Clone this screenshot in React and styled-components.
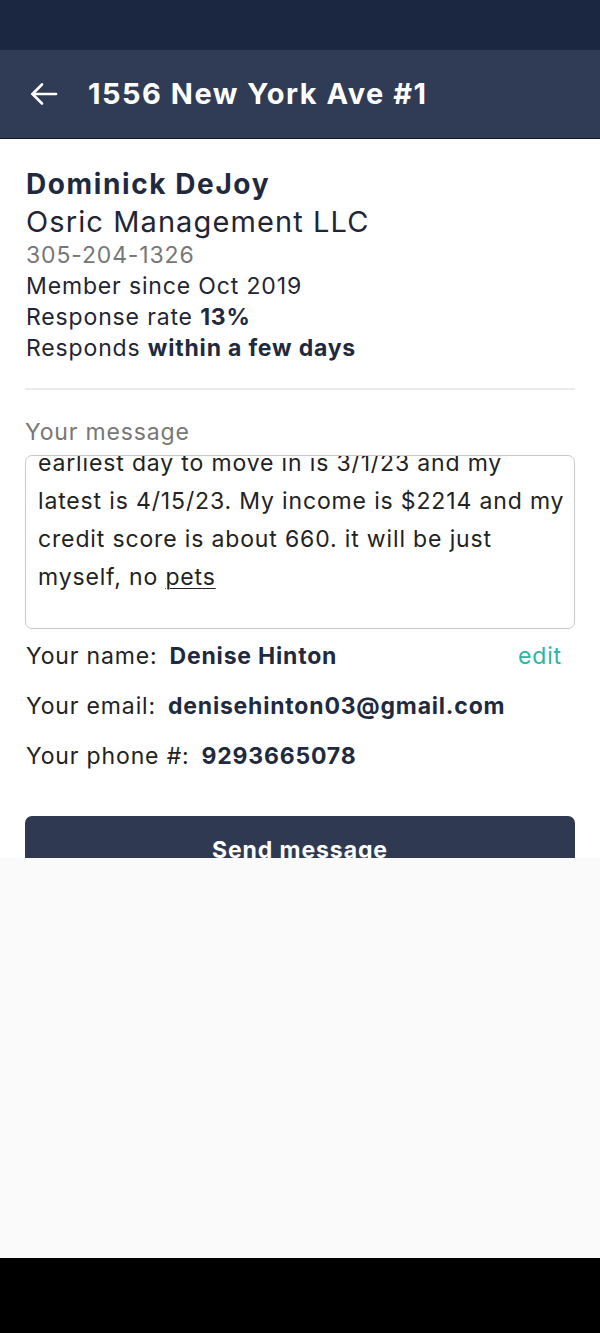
import styled, { createGlobalStyle } from 'styled-components';

const GlobalStyle = createGlobalStyle`
    html, body {
        margin: 0;
        padding: 0;
        background: #000;
    }
    * {
        box-sizing: border-box;
    }
`;

const FONT = `Inter, "Noto Sans", sans-serif`;

// the textarea is scrolled, so the first line shows only its lower part
const messageLines = [
    "earliest day to move in is 3/1/23 and my",
    "latest is 4/15/23. My income is $2214 and my",
    "credit score is about 660. it will be just",
];

export default function App(){
    return (
        <>
            <GlobalStyle/>
            <Screen>
                <StatusBar/>
                <Header>
                    <BackArrow viewBox="0 0 28 24" fill="none" stroke="#fff" strokeWidth="2.6" strokeLinecap="round" strokeLinejoin="round">
                        <path d="M26 12H2.5"/>
                        <path d="M12 2.5L2.5 12L12 21.5"/>
                    </BackArrow>
                    <Title>1556 New York Ave #1</Title>
                </Header>

                <Content>
                    <Landlord>
                        <Name>Dominick DeJoy</Name>
                        <Company>Osric Management LLC</Company>
                        <Phone>305-204-1326</Phone>
                        <Fact>Member since Oct 2019</Fact>
                        <Fact>Response rate <b>13%</b></Fact>
                        <Fact>Responds <b>within a few days</b></Fact>
                    </Landlord>

                    <Divider/>

                    <Label>Your message</Label>
                    <MessageBox>
                        <MessageText $scroll={12}>
                            {messageLines.map((line) => <span key={line}>{line}</span>)}
                            <span>myself, no <Suggest>pets</Suggest></span>
                        </MessageText>
                    </MessageBox>

                    <Details>
                        <DetailRow>
                            <DetailLabel>Your name:</DetailLabel>
                            <DetailValue>Denise Hinton</DetailValue>
                            <Edit>edit</Edit>
                        </DetailRow>
                        <DetailRow>
                            <DetailLabel>Your email:</DetailLabel>
                            <DetailValue>denisehinton03@gmail.com</DetailValue>
                        </DetailRow>
                        <DetailRow>
                            <DetailLabel>Your phone #:</DetailLabel>
                            <DetailValue>9293665078</DetailValue>
                        </DetailRow>
                    </Details>

                    <SendButton>Send message</SendButton>
                </Content>

                <Sheet/>
                <NavBar/>
            </Screen>
        </>
    )
}

const Screen = styled.div`
    width: 600px;
    height: 1333px;
    display: flex;
    flex-direction: column;
    background: #fff;
    font-family: ${FONT};
    overflow: hidden;
`;

const StatusBar = styled.div`
    height: 50px;
    flex-shrink: 0;
    background: #1b2740;
`;

const Header = styled.header`
    height: 89px;
    flex-shrink: 0;
    display: flex;
    align-items: center;
    gap: 30px;
    padding: 0 0 1px 30px;
    background: #303c56;
    border-bottom: 1px solid #141a26;
`;

const BackArrow = styled.svg`
    width: 28px;
    height: 24px;
`;

const Title = styled.h1`
    margin: 0;
    color: #fff;
    font-size: 29px;
    font-weight: 700;
    letter-spacing: 1.5px;
`;

const Content = styled.main`
    height: 719px;
    flex-shrink: 0;
    overflow: hidden;
    padding: 25px 25px 0 25px;
    color: #1f2535;
    font-size: 23px;
    letter-spacing: 0.85px;
`;

const Landlord = styled.section`
    display: flex;
    flex-direction: column;
    padding-left: 1px;

    b{
        font-weight: 700;
        color: #1f2a40;
        letter-spacing: 0.8px;
    }
`;

const Name = styled.h2`
    margin: 0;
    font-size: 28px;
    line-height: 40px;
    font-weight: 700;
    color: #1f2a40;
    letter-spacing: 1.6px;
`;

const Company = styled.div`
    font-size: 29px;
    line-height: 36px;
    letter-spacing: 1.1px;
`;

const Phone = styled.div`
    line-height: 31px;
    color: #777;
`;

const Fact = styled.div`
    line-height: 31px;
`;

const Divider = styled.hr`
    margin: 24px 0 28px 0;
    border: none;
    border-top: 2px solid #ebebeb;
`;

const Label = styled.div`
    line-height: 28px;
    color: #777;
    margin-bottom: 9px;
`;

const MessageBox = styled.div`
    height: 174px;
    overflow: hidden;
    padding: 0 12px;
    border: 1.5px solid #c9c9c9;
    border-radius: 7px;
`;

const MessageText = styled.div`
    display: flex;
    flex-direction: column;
    margin-top: ${(p) => -p.$scroll}px;
    line-height: 38px;
    color: #222;
    white-space: nowrap;
`;

const Suggest = styled.span`
    text-decoration: underline;
    text-underline-offset: 3px;
    text-decoration-thickness: 1px;
`;

const Details = styled.div`
    display: flex;
    flex-direction: column;
    margin-top: 2px;
`;

const DetailRow = styled.div`
    height: 50px;
    display: flex;
    align-items: center;
    gap: 12px;
    padding-left: 1px;
`;

const DetailLabel = styled.span`
    color: #222;
`;

const DetailValue = styled.span`
    font-weight: 700;
    color: #1f2a40;
    letter-spacing: 0.8px;
`;

const Edit = styled.span`
    margin-left: auto;
    margin-right: 13px;
    color: #2bb5a4;
`;

const SendButton = styled.button`
    width: 100%;
    height: 60px;
    margin-top: 35px;
    border: none;
    border-radius: 7px;
    background: #2f3a52;
    color: #fff;
    font-family: ${FONT};
    font-size: 23px;
    font-weight: 700;
    letter-spacing: 0.9px;
    padding-top: 8px;
`;

const Sheet = styled.div`
    height: 400px;
    flex-shrink: 0;
    background: #fafafa;
`;

const NavBar = styled.div`
    flex: 1;
    background: #000;
`;
